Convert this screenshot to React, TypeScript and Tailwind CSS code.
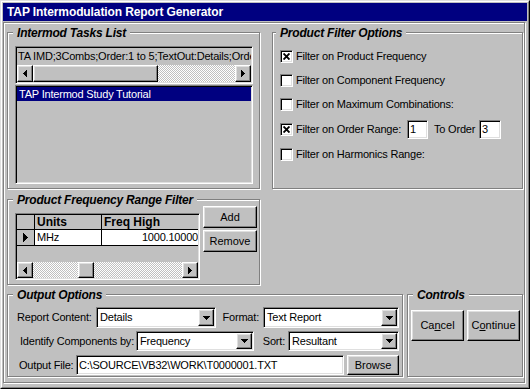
import React from "react";

const sunken =
  "border border-t-[#808080] border-l-[#808080] border-b-white border-r-white shadow-[inset_1px_1px_0_#000,inset_-1px_-1px_0_#dfdfdf]";
const raised =
  "border border-t-white border-l-white border-b-black border-r-black shadow-[inset_-1px_-1px_0_#808080,inset_1px_1px_0_#dfdfdf]";
const etched = "border border-[#808080] shadow-[inset_1px_1px_0_#fff,1px_1px_0_#fff]";
const hatch =
  "bg-[image:repeating-conic-gradient(#c0c0c0_0%_25%,#ffffff_0%_50%)] bg-[length:2px_2px]";

function TriDown() {
  return (
    <svg width="7" height="4" viewBox="0 0 7 4" shapeRendering="crispEdges">
      <path d="M0 0h7v1H0z M1 1h5v1H1z M2 2h3v1H2z M3 3h1v1H3z" fill="#000" />
    </svg>
  );
}
function TriLeft() {
  return (
    <svg width="4" height="7" viewBox="0 0 4 7" shapeRendering="crispEdges">
      <path d="M3 0h1v7H3z M2 1h1v5H2z M1 2h1v3H1z M0 3h1v1H0z" fill="#000" />
    </svg>
  );
}
function TriRight() {
  return (
    <svg width="4" height="7" viewBox="0 0 4 7" shapeRendering="crispEdges">
      <path d="M0 0h1v7H0z M1 1h1v5H1z M2 2h1v3H2z M3 3h1v1H3z" fill="#000" />
    </svg>
  );
}

function Group({
  title,
  titlePos,
  className,
  children,
}: {
  title: string;
  titlePos: string;
  className: string;
  children?: React.ReactNode;
}) {
  return (
    <div className={`relative shrink-0 ${etched} ${className}`}>
      <div
        className={`absolute -top-[7px] ${titlePos} px-[4px] bg-[#c0c0c0] text-[12px] leading-[14px] font-bold italic text-black whitespace-nowrap`}
      >
        {title}
      </div>
      {children}
    </div>
  );
}

function Check({ checked }: { checked?: boolean }) {
  return (
    <div className={`w-[13px] h-[13px] shrink-0 bg-white ${sunken} flex items-center justify-center`}>
      {checked && (
        <svg width="7" height="7" viewBox="0 0 7 7">
          <path d="M0.5 0.5L6.5 6.5M6.5 0.5L0.5 6.5" stroke="#000" strokeWidth="1.9" />
        </svg>
      )}
    </div>
  );
}

function CheckRow({
  checked,
  label,
  className,
}: {
  checked?: boolean;
  label: string;
  className: string;
}) {
  return (
    <div className={`h-[13px] flex items-center ${className}`}>
      <Check checked={checked} />
      <span className="ml-[3px] whitespace-nowrap">{label}</span>
    </div>
  );
}

function Combo({ width, value, height }: { width: string; value: string; height: string }) {
  return (
    <div className={`${width} ${height} shrink-0 bg-white ${sunken} p-px flex items-stretch`}>
      <div className="flex-1 pl-[2px] flex items-center whitespace-nowrap overflow-hidden">{value}</div>
      <div className={`w-[16px] ${raised} bg-[#c0c0c0] flex items-center justify-center`}>
        <TriDown />
      </div>
    </div>
  );
}

function Button({ className, children }: { className: string; children: React.ReactNode }) {
  return (
    <div
      className={`${raised} bg-[#c0c0c0] flex items-center justify-center shrink-0 text-[11px] tracking-normal whitespace-nowrap ${className}`}
    >
      {children}
    </div>
  );
}

function ArrowBtn({ dir, h }: { dir: "l" | "r"; h: string }) {
  return (
    <div className={`w-[16px] ${h} shrink-0 ${raised} bg-[#c0c0c0] flex items-center justify-center`}>
      {dir === "l" ? <TriLeft /> : <TriRight />}
    </div>
  );
}

export default function App() {
  return (
    <div className="w-[530px] h-[389px] bg-[#c0c0c0] border border-t-[#dfdfdf] border-l-[#dfdfdf] border-b-black border-r-black font-['Liberation_Sans',Arial,sans-serif] text-[11px] tracking-[-0.2px] text-black select-none">
      <div className="w-full h-full border border-t-white border-l-white border-b-[#808080] border-r-[#808080] p-px flex flex-col">
        <div className="h-[18px] shrink-0 bg-[#000080] text-white text-[12px] font-bold leading-[18px] pl-[4px] tracking-[-0.1px] whitespace-nowrap">
          TAP Intermodulation Report Generator
        </div>
        <div className="mt-px mb-[3px] mr-[2px] flex-1 border border-[#808080] shadow-[inset_1px_1px_0_#fff,1px_1px_0_#fff] pl-[3px] pt-[9px] flex flex-col">
          {/* Row 1 */}
          <div className="flex">
            <Group title="Intermod Tasks List" titlePos="left-[5px]" className="w-[253px] h-[157px] pl-[7px] pt-[13px]">
              <div className={`w-[238px] h-[38px] ${sunken} bg-[#c0c0c0] p-px flex flex-col`}>
                <div className="h-[17px] pl-[1px] leading-[17px] whitespace-nowrap overflow-hidden">
                  TA IMD;3Combs;Order:1 to 5;TextOut:Details;Order
                </div>
                <div className="h-[17px] flex">
                  <ArrowBtn dir="l" h="h-[17px]" />
                  <div className={`w-[125px] h-[17px] ${raised} bg-[#c0c0c0]`} />
                  <div className={`flex-1 ${hatch}`} />
                  <ArrowBtn dir="r" h="h-[17px]" />
                </div>
              </div>
              <div className={`mt-px w-[238px] h-[99px] ${sunken} bg-[#c0c0c0] p-px`}>
                <div className="h-[14px] bg-[#000080] text-white pl-[2px] leading-[14px] whitespace-nowrap">
                  TAP Intermod Study Tutorial
                </div>
              </div>
            </Group>

            <Group title="Product Filter Options" titlePos="left-[3px]" className="ml-[12px] w-[251px] h-[157px] pl-[7px] pt-[17px] flex flex-col">
              <CheckRow checked label="Filter on Product Frequency" className="" />
              <CheckRow label="Filter on Component Frequency" className="mt-[11px]" />
              <CheckRow label="Filter on Maximum Combinations:" className="mt-[11px]" />
              <div className="h-[13px] flex items-center mt-[12px]">
                <Check checked />
                <span className="ml-[3px] w-[111px] whitespace-nowrap">Filter on Order Range:</span>
                <div className={`w-[21px] h-[19px] shrink-0 bg-white ${sunken} pl-[2px] leading-[17px]`}>1</div>
                <span className="ml-[6px] w-[45px] whitespace-nowrap">To Order</span>
                <div className={`w-[22px] h-[19px] shrink-0 bg-white ${sunken} pl-[2px] leading-[17px]`}>3</div>
              </div>
              <CheckRow label="Filter on Harmonics Range:" className="mt-[12px]" />
            </Group>
          </div>

          {/* Row 2 */}
          <Group
            title="Product Frequency Range Filter"
            titlePos="left-[5px]"
            className="mt-[10px] w-[253px] h-[86px] pl-[7px] flex items-start"
          >
            <div className={`mt-[13px] w-[185px] h-[67px] ${sunken} bg-[#c0c0c0] p-px flex flex-col`}>
              <div className="h-[15px] flex border-b border-black text-[12px] font-bold leading-[14px] tracking-normal">
                <div className="w-[18px] border-r border-black" />
                <div className="w-[67px] border-r border-black pl-[2px]">Units</div>
                <div className="flex-1 pl-[2px] whitespace-nowrap">Freq High</div>
              </div>
              <div className="h-[16px] flex border-b border-black leading-[15px]">
                <div className="w-[18px] border-r border-black flex items-center justify-center">
                  <svg width="5" height="9" viewBox="0 0 5 9" shapeRendering="crispEdges">
                    <path d="M0 0h1v9H0z M1 1h1v7H1z M2 2h1v5H2z M3 3h1v3H3z M4 4h1v1H4z" fill="#000" />
                  </svg>
                </div>
                <div className="w-[67px] border-r border-black bg-white pl-[2px]">MHz</div>
                <div className="flex-1 bg-white text-right whitespace-nowrap overflow-hidden">1000.10000</div>
              </div>
              <div className="flex-1" />
              <div className="h-[16px] flex">
                <ArrowBtn dir="l" h="h-[16px]" />
                <div className={`w-[45px] ${hatch}`} />
                <div className={`w-[16px] h-[16px] ${raised} bg-[#c0c0c0]`} />
                <div className={`flex-1 ${hatch}`} />
                <ArrowBtn dir="r" h="h-[16px]" />
              </div>
            </div>
            <div className="ml-[3px] mt-[6px] flex flex-col gap-[2px]">
              <Button className="w-[54px] h-[22px]">Add</Button>
              <Button className="w-[54px] h-[22px]">Remove</Button>
            </div>
          </Group>

          {/* Row 3 */}
          <div className="mt-[9px] flex">
            <Group title="Output Options" titlePos="left-[5px]" className="w-[396px] h-[83px] pt-[12px] flex flex-col">
              <div className="h-[21px] flex items-center pl-[9px]">
                <span className="w-[79px] whitespace-nowrap">Report Content:</span>
                <Combo width="w-[120px]" height="h-[21px]" value="Details" />
                <span className="w-[47px] text-right pr-[4px]">Format:</span>
                <Combo width="w-[136px]" height="h-[21px]" value="Text Report" />
              </div>
              <div className="mt-[3px] h-[20px] flex items-center pl-[12px]">
                <span className="w-[116px] whitespace-nowrap">Identify Components by:</span>
                <Combo width="w-[118px]" height="h-[20px]" value="Frequency" />
                <span className="w-[34px] text-right pr-[3px]">Sort:</span>
                <Combo width="w-[111px]" height="h-[20px]" value="Resultant" />
              </div>
              <div className="mt-[4px] h-[20px] flex items-center pl-[11px]">
                <span className="w-[57px] whitespace-nowrap">Output File:</span>
                <div className={`w-[268px] h-[20px] shrink-0 bg-white ${sunken} pl-[2px] leading-[18px] whitespace-nowrap overflow-hidden`}>
                  C:\SOURCE\VB32\WORK\T0000001.TXT
                </div>
                <Button className="ml-[3px] w-[52px] h-[20px]">Browse</Button>
              </div>
            </Group>
            <Group title="Controls" titlePos="left-[5px]" className="ml-[4px] w-[116px] h-[83px] pl-[3px] pt-[15px] flex gap-[3px] items-start">
              <Button className="w-[53px] h-[31px]">
                <span>
                  Ca<u>n</u>cel
                </span>
              </Button>
              <Button className="w-[53px] h-[31px]">
                <span>
                  C<u>o</u>ntinue
                </span>
              </Button>
            </Group>
          </div>
        </div>
      </div>
    </div>
  );
}
